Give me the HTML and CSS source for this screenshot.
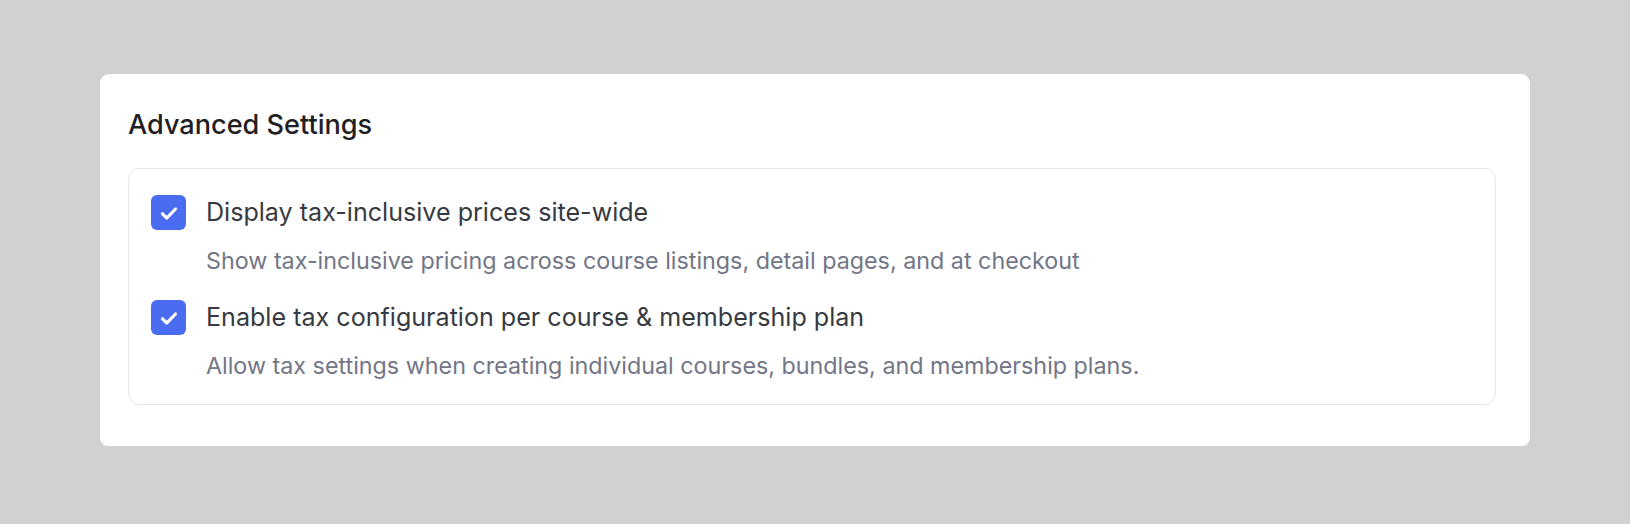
FILE: index.html
```html
<!DOCTYPE html>
<html lang="en">
<head>
<meta charset="utf-8">
<title>Advanced Settings</title>
<link rel="stylesheet" href="styles.css">
</head>
<body>
<main class="page">
  <section class="card">
    <h2 class="card-title">Advanced Settings</h2>
    <div class="options">
      <div class="option">
        <label class="option-row">
          <span class="checkbox" aria-hidden="true">
            <svg viewBox="0 0 24 24" width="24" height="24"><path d="M5.5 12.8l4.3 4.2 8.7-9" fill="none" stroke="#fff" stroke-width="3.2" stroke-linecap="round" stroke-linejoin="round"/></svg>
          </span>
          <span class="option-label">Display tax-inclusive prices site-wide</span>
        </label>
        <p class="option-desc">Show tax-inclusive pricing across course listings, detail pages, and at checkout</p>
      </div>
      <div class="option">
        <label class="option-row">
          <span class="checkbox" aria-hidden="true">
            <svg viewBox="0 0 24 24" width="24" height="24"><path d="M5.5 12.8l4.3 4.2 8.7-9" fill="none" stroke="#fff" stroke-width="3.2" stroke-linecap="round" stroke-linejoin="round"/></svg>
          </span>
          <span class="option-label">Enable tax configuration per course &amp; membership plan</span>
        </label>
        <p class="option-desc">Allow tax settings when creating individual courses, bundles, and membership plans.</p>
      </div>
    </div>
  </section>
</main>
</body>
</html>
```
FILE: styles.css
```css
* { box-sizing: border-box; }
html, body {
  margin: 0;
  padding: 0;
  background: #d1d1d1;
}
body {
  font-family: Inter, "Noto Sans", "Liberation Sans", sans-serif;
  -webkit-font-smoothing: antialiased;
}
.page {
  padding: 74px 100px 0 100px;
}
.card {
  background: #ffffff;
  border-radius: 9px;
  padding: 35px 34px 42px 28px;
  box-shadow: 0 2px 0 #e2e2e2;
  height: 372px;
}
.card-title {
  margin: 0 0 27px 0;
  font-size: 27.1px;
  line-height: 32px;
  font-weight: 500;
  color: #1f2024;
}
.options {
  border: 1px solid #e4e5e8;
  border-radius: 12px;
  padding: 26px 22px 22px 22px;
  display: flex;
  flex-direction: column;
  gap: 23px;
}
.option-row {
  display: flex;
  align-items: center;
  gap: 20px;
}
.checkbox {
  width: 35px;
  height: 35px;
  border-radius: 6px;
  background: #4a6cf0;
  display: flex;
  align-items: center;
  justify-content: center;
  flex: none;
}
.option-label {
  font-size: 25.1px;
  line-height: 35px;
  color: #383a42;
}
.option-desc {
  margin: 15px 0 0 55px;
  font-size: 23.3px;
  line-height: 32px;
  color: #727686;
}
```
